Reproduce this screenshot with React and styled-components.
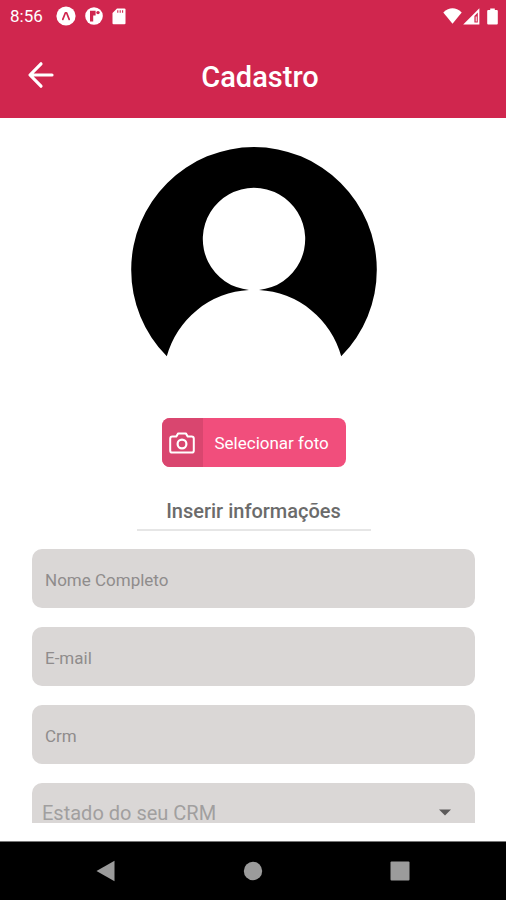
import React, { useState } from 'react';
import styled, { createGlobalStyle } from 'styled-components';

const GlobalStyle = createGlobalStyle`
  * {
    box-sizing: border-box;
  }

  body {
    margin: 0;
    background-color: #fff;
    font-family: Roboto, 'Liberation Sans', sans-serif;
  }
`;

const Screen = styled.div`
  display: flex;
  flex-direction: column;
  height: 100vh;
`;

const Header = styled.header`
  flex-shrink: 0;
  background-color: #d0264e;
  color: #fff;
`;

const StatusBar = styled.div`
  display: flex;
  align-items: center;
  justify-content: space-between;
  height: 32px;
  padding: 0 8px 0 10px;
`;

const StatusGroup = styled.div`
  display: flex;
  align-items: center;
  gap: ${(props) => props.$gap}px;
`;

const Clock = styled.span`
  margin-right: 4px;
  font-size: 17px;
  line-height: 20px;
`;

const TitleBar = styled.div`
  display: grid;
  grid-template-columns: 32px 1fr 18px;
  align-items: center;
  height: 86px;
  padding: 0 25px;
`;

const BackButton = styled.button`
  display: flex;
  align-items: center;
  justify-content: center;
  width: 32px;
  height: 32px;
  padding: 0;
  border: none;
  background: none;
  color: inherit;
  cursor: pointer;
`;

const Title = styled.h1`
  margin: 0;
  padding-top: 4px;
  font-size: 29px;
  font-weight: 500;
  line-height: 34px;
  text-align: center;
`;

const Content = styled.main`
  flex: 1;
  min-height: 0;
  margin-bottom: 18px;
  padding: 29px 31px 0 32px;
  overflow-y: auto;
  scrollbar-width: none;
`;

const Form = styled.form`
  display: flex;
  flex-direction: column;
  align-items: center;
`;

const PhotoButton = styled.button`
  display: flex;
  width: 184px;
  height: 49px;
  margin: 61px 0 32px;
  padding: 0;
  border: none;
  border-radius: 8px;
  overflow: hidden;
  background-color: #f14e7c;
  color: #fff;
  font-family: inherit;
  font-size: 17px;
  cursor: pointer;
`;

const PhotoIcon = styled.span`
  display: flex;
  align-items: center;
  justify-content: center;
  width: 41px;
  height: 100%;
  background-color: #d9466f;
`;

const PhotoLabel = styled.span`
  flex: 1;
  align-self: center;
  padding-left: 12px;
  line-height: 20px;
  text-align: left;
`;

const SectionTitle = styled.h2`
  width: 234px;
  margin: 0 0 18px;
  padding-bottom: 5px;
  border-bottom: 2px solid #e6e6e6;
  color: #6b6b6b;
  font-size: 20px;
  font-weight: 500;
  line-height: 25px;
  text-align: center;
`;

const Fields = styled.div`
  display: flex;
  flex-direction: column;
  gap: 19px;
  width: 100%;
  padding-bottom: 19px;
`;

const Input = styled.input`
  width: 100%;
  height: 59px;
  padding: 2px 13px 0;
  border: none;
  border-radius: 10px;
  background-color: #dad7d6;
  color: #333;
  font-family: inherit;
  font-size: 17px;

  &::placeholder {
    color: #8f8c8c;
    opacity: 1;
  }
`;

const SelectBox = styled.div`
  position: relative;
  color: #5c5a5a;

  svg {
    position: absolute;
    top: 26px;
    right: 24px;
    pointer-events: none;
  }
`;

const Select = styled.select`
  display: block;
  width: 100%;
  height: 59px;
  padding: 0 10px;
  border: none;
  border-radius: 10px;
  appearance: none;
  background-color: #dad7d6;
  color: ${(props) => (props.$empty ? '#a19f9f' : '#333')};
  font-family: inherit;
  font-size: 20px;
`;

const NavBar = styled.nav`
  display: flex;
  align-items: center;
  justify-content: space-between;
  flex-shrink: 0;
  height: 59px;
  padding: 0 94px;
  border-top: 1px solid #777;
  background-color: #000;
`;

const NavButton = styled.button`
  display: flex;
  align-items: center;
  justify-content: center;
  width: 24px;
  height: 24px;
  padding: 0;
  border: none;
  background: none;
  color: #9b9b9b;
  cursor: pointer;
`;

const ExpoIcon = () => (
  <svg width="20" height="20" viewBox="0 0 20 20">
    <circle cx="10" cy="10" r="9.6" fill="currentColor" />
    <path d="M6.8 13.4 L9.4 6.8 H10.6 L13.2 13.4" fill="none" stroke="#d0264e" strokeWidth="1.7" strokeLinecap="round" strokeLinejoin="round" />
  </svg>
);

const AppIcon = () => (
  <svg width="18" height="18" viewBox="0 0 18 18">
    <circle cx="9" cy="9" r="8.8" fill="currentColor" />
    <path d="M5 3.8 H10.6 V8.4 H8.2 V14.6 H5 Z" fill="#d0264e" />
    <circle cx="13" cy="5.6" r="1.7" fill="#d0264e" />
  </svg>
);

const SdCardIcon = () => (
  <svg width="14" height="17" viewBox="0 0 14 17">
    <path d="M5 0.5 H12.4 Q13.5 0.5 13.5 1.6 V15.2 Q13.5 16.3 12.4 16.3 H1.6 Q0.5 16.3 0.5 15.2 V5 Z" fill="currentColor" />
    <path d="M5.8 2.2 V4.8 M8.2 2.2 V4.8 M10.6 2.2 V4.8" stroke="#d0264e" strokeWidth="1.1" />
  </svg>
);

const WifiIcon = () => (
  <svg width="19" height="16" viewBox="0 0 19 16">
    <path d="M0.3 4.4 Q9.5 -3.8 18.7 4.4 L9.5 15.8 Z" fill="currentColor" />
  </svg>
);

const SignalIcon = () => (
  <svg width="17" height="17" viewBox="0 0 17 17">
    <path d="M0.2 16.4 L16.4 0.2 V16.4 Z" fill="currentColor" />
    <path d="M11.4 8 L14.8 4.6 V14.6 H11.4 Z" fill="#d0264e" />
    <path d="M12.7 8.4 H13.7 V13.4 H12.7 Z" fill="currentColor" />
  </svg>
);

const BatteryIcon = () => (
  <svg width="11" height="17" viewBox="0 0 11 17">
    <path d="M3.2 0.4 H7.8 V2 H9.8 Q10.8 2 10.8 3 V15.6 Q10.8 16.6 9.8 16.6 H1.2 Q0.2 16.6 0.2 15.6 V3 Q0.2 2 1.2 2 H3.2 Z" fill="currentColor" />
  </svg>
);

const BackIcon = () => (
  <svg width="28" height="28" viewBox="0 0 28 28">
    <path d="M25 14 H3.4 M14 2.8 L3 14 L14 25.2" fill="none" stroke="currentColor" strokeWidth="3.2" strokeLinecap="round" strokeLinejoin="round" />
  </svg>
);

const CameraIcon = () => (
  <svg width="26" height="22" viewBox="0 0 26 22">
    <path
      d="M3.4 4.6 H7.2 L9.2 1.4 H16.8 L18.8 4.6 H22.6 Q24.8 4.6 24.8 6.8 V18.4 Q24.8 20.6 22.6 20.6 H3.4 Q1.2 20.6 1.2 18.4 V6.8 Q1.2 4.6 3.4 4.6 Z"
      fill="none"
      stroke="currentColor"
      strokeWidth="2"
      strokeLinejoin="round"
    />
    <circle cx="13" cy="12" r="4.4" fill="none" stroke="currentColor" strokeWidth="2.2" />
  </svg>
);

const Avatar = () => (
  <svg width="246" height="210" viewBox="0 0 246 210" role="img" aria-label="Foto de perfil">
    <path d="M35.8 209.3 A122.8 122.8 0 1 1 210.2 209.3 A90.3 90.3 0 0 0 128 143 A51.2 51.2 0 1 0 118 143 A90.3 90.3 0 0 0 35.8 209.3 Z" fill="#000" />
  </svg>
);

const fields = [
  { name: 'nome', type: 'text', label: 'Nome Completo' },
  { name: 'email', type: 'email', label: 'E-mail' },
  { name: 'crm', type: 'text', label: 'Crm' },
];

const estados = ['BA', 'MG', 'PR', 'RJ', 'RS', 'SP'];

const App = () => {
  const [values, setValues] = useState({ nome: '', email: '', crm: '', estado: '' });

  const handleChange = (e) => {
    setValues({ ...values, [e.target.name]: e.target.value });
  };

  return (
    <Screen>
      <GlobalStyle />
      <Header>
        <StatusBar>
          <StatusGroup $gap={9}>
            <Clock>8:56</Clock>
            <ExpoIcon />
            <AppIcon />
            <SdCardIcon />
          </StatusGroup>
          <StatusGroup $gap={7}>
            <StatusGroup $gap={1}>
              <WifiIcon />
              <SignalIcon />
            </StatusGroup>
            <BatteryIcon />
          </StatusGroup>
        </StatusBar>
        <TitleBar>
          <BackButton type="button" aria-label="Voltar">
            <BackIcon />
          </BackButton>
          <Title>Cadastro</Title>
        </TitleBar>
      </Header>

      <Content>
        <Form>
          <Avatar />
          <PhotoButton type="button">
            <PhotoIcon>
              <CameraIcon />
            </PhotoIcon>
            <PhotoLabel>Selecionar foto</PhotoLabel>
          </PhotoButton>
          <SectionTitle>Inserir informações</SectionTitle>
          <Fields>
            {fields.map((field) => (
              <Input
                key={field.name}
                type={field.type}
                name={field.name}
                placeholder={field.label}
                aria-label={field.label}
                value={values[field.name]}
                onChange={handleChange}
              />
            ))}
            <SelectBox>
              <Select
                name="estado"
                aria-label="Estado do seu CRM"
                value={values.estado}
                onChange={handleChange}
                $empty={!values.estado}
              >
                <option value="">Estado do seu CRM</option>
                {estados.map((uf) => (
                  <option key={uf} value={uf}>{uf}</option>
                ))}
              </Select>
              <svg width="12" height="7" viewBox="0 0 12 7">
                <path d="M0 0.4 H12 L6 6.6 Z" fill="currentColor" />
              </svg>
            </SelectBox>
          </Fields>
        </Form>
      </Content>

      <NavBar>
        <NavButton type="button" aria-label="Voltar">
          <svg width="20" height="22" viewBox="0 0 20 22">
            <path d="M0.5 11 L18.5 0.8 V21.2 Z" fill="currentColor" />
          </svg>
        </NavButton>
        <NavButton type="button" aria-label="Início">
          <svg width="20" height="20" viewBox="0 0 20 20">
            <circle cx="10" cy="10" r="9.2" fill="currentColor" />
          </svg>
        </NavButton>
        <NavButton type="button" aria-label="Recentes">
          <svg width="20" height="20" viewBox="0 0 20 20">
            <rect x="0.5" y="0.5" width="19" height="19" rx="1" fill="currentColor" />
          </svg>
        </NavButton>
      </NavBar>
    </Screen>
  );
};

export default App;
